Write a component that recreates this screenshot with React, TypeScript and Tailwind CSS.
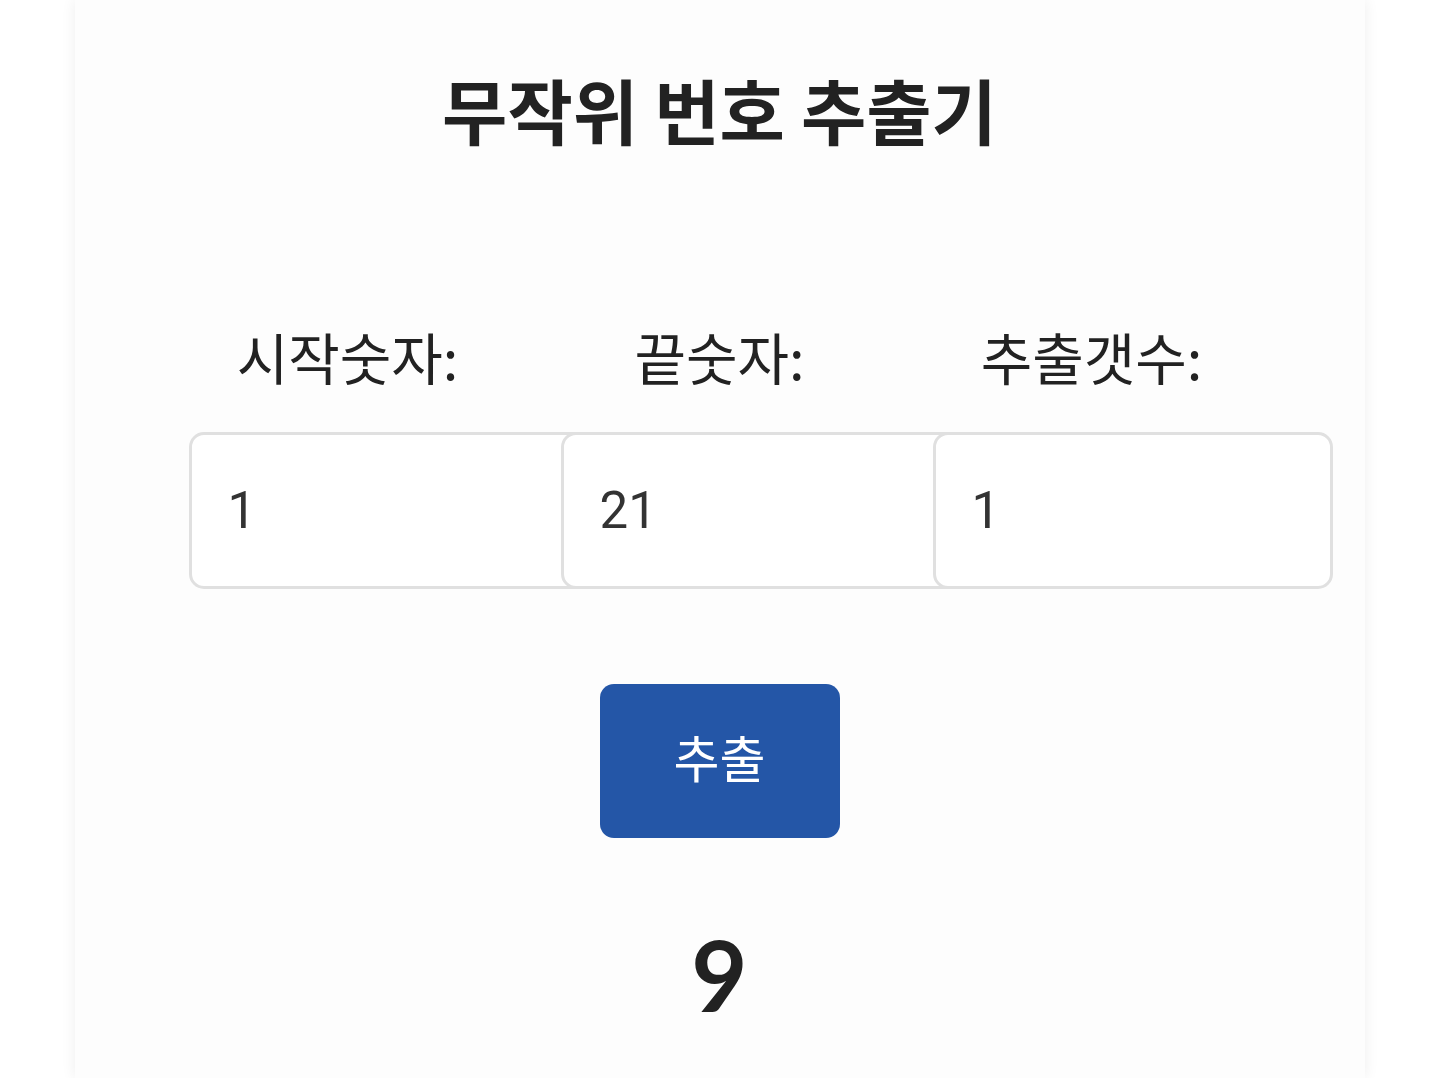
import React from "react";

export default function App() {
  const cjk = { fontFamily: '"Noto Sans CJK KR", "Noto Sans", sans-serif' };
  const fields = [
    { label: "시작숫자:", value: "1" },
    { label: "끝숫자:", value: "21" },
    { label: "추출갯수:", value: "1" },
  ];
  return (
    <div className="min-h-screen bg-white flex justify-center overflow-hidden" style={cjk}>
      <div className="w-[1290px] min-h-[1078px] bg-[#fdfdfd] shadow-[0_0_14px_rgba(0,0,0,0.07)] flex flex-col items-center">
        <h1 className="mt-[73px] text-[71px] leading-none font-bold text-[#222222]">무작위 번호 추출기</h1>
        <div className="mt-[184px] grid grid-cols-3 w-[1116px]">
          {fields.map((f) => (
            <div key={f.label} className="flex flex-col">
              <div className="text-center text-[56px] leading-none text-[#222222]">{f.label}</div>
              <input
                readOnly
                value={f.value}
                className="mt-[48px] ml-[27px] w-[400px] h-[157px] shrink-0 bg-white border-[3px] border-[#e0e0e0] rounded-[15px] pl-[36px] text-[51px] text-[#333333] outline-none"
                style={{ fontFamily: 'Roboto, "Noto Sans CJK KR", sans-serif' }}
              />
            </div>
          ))}
        </div>
        <button className="mt-[95px] w-[240px] h-[154px] rounded-[14px] bg-[#2456a7] text-white text-[50px] leading-none pb-[10px]">
          추출
        </button>
        <div
          className="mt-[88px] text-[97px] leading-none font-bold text-[#222222]"
          style={{ fontFamily: 'Lato, "Noto Sans CJK KR", sans-serif' }}
        >
          9
        </div>
      </div>
    </div>
  );
}
